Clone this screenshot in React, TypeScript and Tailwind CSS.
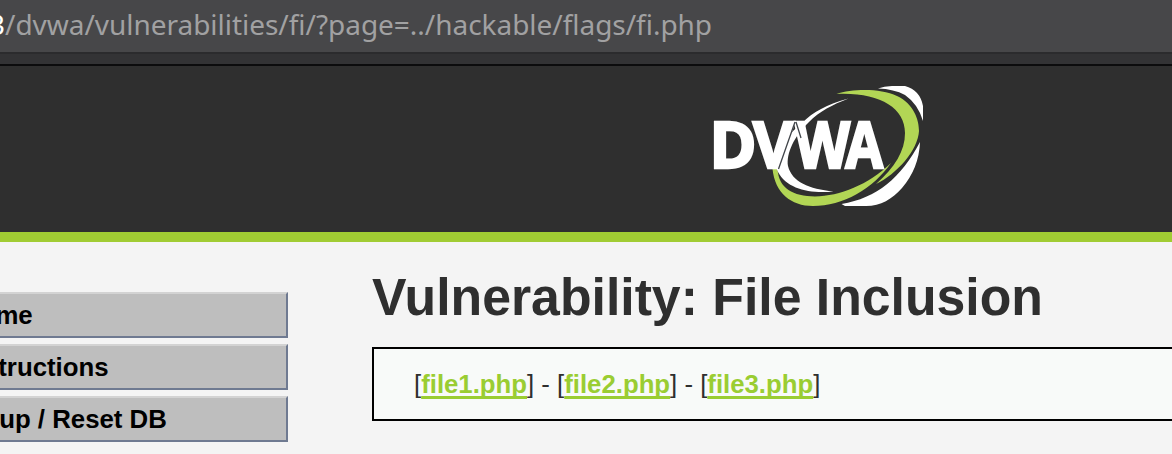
const menu = [
  { label: 'Home', shift: '-ml-[39px]' },
  { label: 'Instructions', shift: '-ml-[39px]' },
  { label: 'Setup / Reset DB', shift: '-ml-[41px]' },
];

const files = ['file1.php', 'file2.php', 'file3.php'];

function Logo() {
  return (
    <svg className="block h-[120px] w-[210px]" viewBox="0 0 210 120" role="img" aria-label="DVWA">
      <path fill="#fff" d="M165 2.5Q171 0 179 0H192Q207 4 210 20V35Q205 18 192 9Q181 3 165 2.5Z" />
      <path fill="#fff" d="M207 56Q206 82 189 102C179 113 168 120 153 120H132L128.500 118C164 112 188 92 207 56Z" />
      <path fill="#b2d655" d="M123.500 8C139 3 167 2 184 10C201 18 206 34 206 45C205 64 184 88 163 98C182 81 192 65 192 47C192 21 165 6 123.500 8Z" />
      <path fill="#b2d655" d="M59.500 83C62 107 78 120 100 120C130 120 160 103 178 77C155 99 127 110 102 110.500C80 110 66 103 64.500 83Z" />
      <path fill="#fff" d="M135.500 12.500C114 18 99 27 90 36C71 51 59 73 65 86C74 103 97 108 120.500 105.500C96 103 79 96 75 80C73 68 81 50 96 36C107 25 119 19 135.500 12.500Z" />
      <g fill="#fff" stroke="#fff" strokeWidth="2.600" fontFamily="'Open Sans', sans-serif" fontWeight="700" fontSize="64">
        <text x="-3.500" y="82.300" textLength="47" lengthAdjust="spacingAndGlyphs">D</text>
        <text x="40" y="82.300" textLength="41" lengthAdjust="spacingAndGlyphs">V</text>
        <text x="82" y="82.300" textLength="55" lengthAdjust="spacingAndGlyphs">W</text>
        <text x="132.500" y="82.300" textLength="37.500" lengthAdjust="spacingAndGlyphs">A</text>
      </g>
      <path fill="none" stroke="#41454a" strokeWidth="1.300" d="M82 36L65.500 83M83 36L88 52" />
    </svg>
  );
}

export default function App() {
  return (
    <div className="flex h-[454px] w-full flex-col overflow-hidden bg-[#f4f4f4] font-['Liberation_Sans',Arial,sans-serif]">
      <div className="flex h-[52px] shrink-0 items-start overflow-hidden bg-[#474749] font-['Noto_Sans',sans-serif] text-[28px] leading-[49px] tracking-[-0.03px] whitespace-nowrap text-[#a1a1a2]">
        <span className="-ml-[11px] text-white">3</span>
        <span>/dvwa/vulnerabilities/fi/?page=../hackable/flags/fi.php</span>
      </div>
      <div className="h-[14px] shrink-0 border-t-2 border-b-2 border-t-[#2b2b2d] border-b-[#0c0c0d] bg-[#333335]" />
      <header className="h-[176px] shrink-0 border-b-[10px] border-[#a1cc33] bg-[#2f2f2f] pt-5 pl-[713px]">
        <Logo />
      </header>
      <div className="flex min-h-0 flex-1">
        <nav className="flex w-[288px] shrink-0 flex-col gap-1.5 pt-[50px]">
          {menu.map((item) => (
            <a key={item.label} className="flex h-[46px] items-center overflow-hidden border-2 border-l-0 border-t-[#d3d3d3] border-r-[#6f7a91] border-b-[#6f7a91] bg-[#bebebe] text-[25.8px] font-bold whitespace-nowrap text-black">
              <span className={item.shift}>{item.label}</span>
            </a>
          ))}
        </nav>
        <main className="ml-[84px] flex-1 pt-[25px]">
          <h1 className="text-[51.75px] leading-[60px] font-bold whitespace-nowrap text-[#2f2f2f]">Vulnerability: File Inclusion</h1>
          <section className="mt-5 flex h-[74px] items-center border-2 border-r-0 border-black bg-[#f8faf9] pl-10 text-[25.75px] whitespace-pre text-[#2f2f2f]">
            {files.map((file, i) => (
              <span key={file}>
                {i > 0 && ' - '}[<a className="font-bold text-[#9acd32] underline decoration-[3px] underline-offset-[3px] [text-decoration-skip-ink:none]">{file}</a>]
              </span>
            ))}
          </section>
        </main>
      </div>
    </div>
  );
}
